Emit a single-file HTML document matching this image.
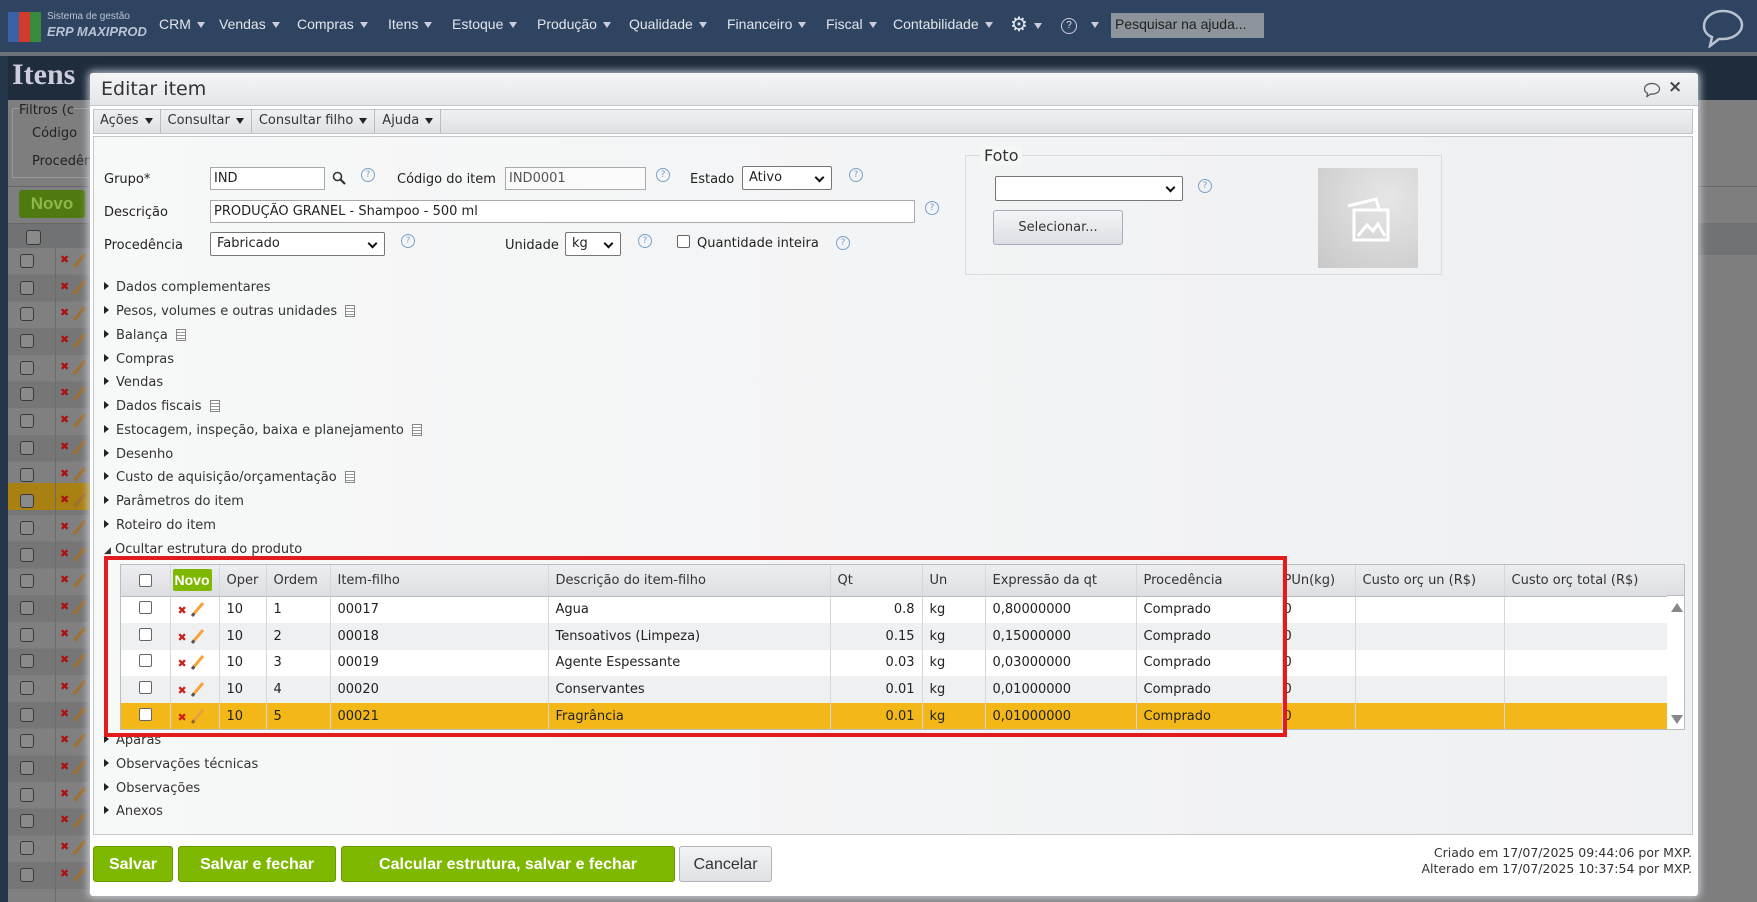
<!DOCTYPE html>
<html><head><meta charset="utf-8">
<style>
*{box-sizing:border-box;margin:0;padding:0}
body{width:1757px;height:902px;overflow:hidden;position:relative;background:#7c7c7c;font-family:"DejaVu Sans","Liberation Sans",sans-serif;font-size:13px;color:#222}
.a{position:absolute}
.nav{left:0;top:0;width:1757px;height:52px;background:#2f4461}
.nav span{position:absolute;top:16px;color:#e2e6ec;font-size:14px;font-family:"Liberation Sans",sans-serif}
.tri{display:inline-block;width:0;height:0;border-left:4px solid transparent;border-right:4px solid transparent;border-top:6px solid #222;vertical-align:middle;margin-left:6px}
.navtri{border-top-color:#ccd}
.cb{position:absolute;width:13px;height:13px;border:1px solid #555;border-radius:2px;background:#fff}
.modal{left:90px;top:73px;width:1608px;height:823px;background:#fff;border-radius:3px;box-shadow:0 0 8px 2px rgba(220,225,235,.8)}
.lbl{position:absolute;font-size:13px;color:#222}
.inp{position:absolute;height:23px;border:1px solid #a9a9a9;background:#fff;font-size:13px;padding:3px 3px;white-space:nowrap}
.sel{position:absolute;height:24px;border:1px solid #767676;border-radius:2px;background:#fff;font-size:13px;padding:3px 6px}
.sel:after{content:"";position:absolute;right:8px;top:7px;width:5px;height:5px;border-right:2px solid #111;border-bottom:2px solid #111;transform:rotate(45deg)}
.q{position:absolute;width:14px;height:14px;border:1px solid #7aa0c8;border-radius:50%;color:#7aa0c8;font-size:9px;text-align:center;line-height:12px}
.sec{position:absolute;left:104px;font-size:13px;color:#333}
.sec:before{content:"";display:inline-block;width:0;height:0;border-top:4px solid transparent;border-bottom:4px solid transparent;border-left:5px solid #222;margin-right:7px;vertical-align:1px}
.doc{display:inline-block;width:10px;height:12px;border:1px solid #888;margin-left:8px;vertical-align:-2px;background:repeating-linear-gradient(#fff 0 2px,#999 2px 3px)}
table{border-collapse:collapse;font-size:13px}
td,th{border-right:1px solid #d5d7db;padding:0 7px;white-space:nowrap;text-align:left;font-weight:normal}
th{height:31px;background:linear-gradient(#eceef1,#dcdee2);color:#333;border-bottom:1px solid #b8bbc0}
td{height:26.8px}
tr.w td{background:#fff}tr.g td{background:#eff0f2}tr.y td{background:#f3b818}
.btn{position:absolute;top:846px;height:36px;background:#7fb800;color:#fff;font-weight:bold;font-family:"Liberation Sans",sans-serif;font-size:16px;border-radius:3px;text-align:center;line-height:36px;border:1px solid #6a9a00}
.x{color:#c9211e;font-weight:bold;font-size:11px}
.pen{display:inline-block;width:3px;height:17px;background:linear-gradient(#f6a33a 80%,#555 80%);transform:rotate(40deg);margin-left:9px;vertical-align:-4px}
.lr{position:relative;height:26.7px;width:82px}
.lr .c{position:absolute;left:12px;top:6px;width:14px;height:14px;border:1px solid #3a3a3a;border-radius:3px;background:#8a8a8a}
.lr .xx{position:absolute;left:52px;top:5px;color:#a11;font-size:11px;font-weight:bold}
.lr .pp{position:absolute;left:70px;top:4px;width:3px;height:17px;background:#a07030;transform:rotate(40deg)}
</style></head><body>
<div class="a nav">
 <div class="a" style="left:8px;top:12px;width:33px;height:30px;background:linear-gradient(90deg,#3b62a8 0 33%,#d23a2e 33% 66%,#3a8a3e 66%)"></div>
 <div class="a" style="left:47px;top:11px;color:#b8c4d4;font-size:10px;font-family:'Liberation Sans'">Sistema de gestão</div>
 <div class="a" style="left:47px;top:24px;color:#b8c4d4;font-size:13px;font-style:italic;font-weight:bold;font-family:'Liberation Sans'">ERP MAXIPROD</div>
 <span style="left:159px">CRM<i class="tri navtri"></i></span>
 <span style="left:219px">Vendas<i class="tri navtri"></i></span>
 <span style="left:297px">Compras<i class="tri navtri"></i></span>
 <span style="left:388px">Itens<i class="tri navtri"></i></span>
 <span style="left:452px">Estoque<i class="tri navtri"></i></span>
 <span style="left:537px">Produção<i class="tri navtri"></i></span>
 <span style="left:629px">Qualidade<i class="tri navtri"></i></span>
 <span style="left:727px">Financeiro<i class="tri navtri"></i></span>
 <span style="left:826px">Fiscal<i class="tri navtri"></i></span>
 <span style="left:893px">Contabilidade<i class="tri navtri"></i></span>
 <span style="left:1010px;font-size:20px;top:12px">⚙<i class="tri navtri"></i></span>
 <span style="left:1061px;top:18px;width:16px;height:16px;border:1.5px solid #ccd;border-radius:50%;font-size:10px;text-align:center;line-height:13px">?</span>
 <span style="left:1085px;top:16px"><i class="tri navtri"></i></span>
 <div class="a" style="left:1111px;top:13px;width:153px;height:25px;background:#8e949b;color:#222;font-size:14px;padding:3px 4px;font-family:'Liberation Sans'">Pesquisar na ajuda...</div>
 <svg class="a" style="left:1700px;top:8px" width="46" height="40" viewBox="0 0 46 40"><path d="M23 3C12 3 4 10 4 18c0 5 3 9 8 11l-2 9 9-7c1 0 3 0 4 0 11 0 19-7 19-14S34 3 23 3z" fill="none" stroke="#b9c3d0" stroke-width="2.5"/></svg>
</div>
<div class="a" style="left:0;top:52px;width:1757px;height:4px;background:#6c727a"></div>
<div class="a" style="left:0;top:56px;width:1757px;height:846px;background:#26364a"></div>
<div class="a" style="left:8px;top:56px;width:1749px;height:44px;background:#1f2c3c"></div>
<div class="a" style="left:12px;top:58px;color:#ccd;font-size:30px;font-weight:bold;font-family:'Liberation Serif'">Itens</div>
<div class="a" style="left:8px;top:100px;width:1749px;height:802px;background:#7e7e7e"></div>
<div class="a" style="left:12px;top:108px;width:90px;height:70px;border:1px solid #999"></div>
<div class="a" style="left:19px;top:103px;background:#7e7e7e;color:#222;font-size:13px">Filtros (c</div>
<div class="a" style="left:32px;top:126px;color:#222">Código</div>
<div class="a" style="left:32px;top:154px;color:#222">Procedên</div>
<div class="a" style="left:8px;top:186px;width:1749px;height:1px;background:#666"></div>
<div class="a" style="left:19px;top:190px;width:66px;height:28px;background:#4f7a10;color:#8fb64a;font-weight:bold;font-size:17px;text-align:center;line-height:28px;border-radius:3px;font-family:'Liberation Sans'">Novo</div>
<div class="a" style="left:1720px;top:194px;color:#222">Exibir</div>
<div class="a" style="left:8px;top:223px;width:1749px;height:32px;background:#717274;border-top:1px solid #666;border-bottom:1px solid #666"></div>
<div class="a" style="left:26px;top:230px;width:15px;height:15px;border:1px solid #3a3a3a;border-radius:3px;background:#8a8a8a"></div>
<div class="a" style="left:8px;top:248px;width:82px;height:654px;background:repeating-linear-gradient(#808080 0 26.7px,#767676 26.7px 53.4px)">
 <div class="a" style="left:0;top:235px;width:82px;height:27px;background:#a98012"></div>
 <div class="a" style="left:47px;top:0;width:1px;height:654px;background:#6c6c6c"></div>
 <div class="a" style="left:0;top:0">
  <div class="lr"><i class="c"></i><b class="xx">✖</b><i class="pp"></i></div><div class="lr"><i class="c"></i><b class="xx">✖</b><i class="pp"></i></div><div class="lr"><i class="c"></i><b class="xx">✖</b><i class="pp"></i></div><div class="lr"><i class="c"></i><b class="xx">✖</b><i class="pp"></i></div><div class="lr"><i class="c"></i><b class="xx">✖</b><i class="pp"></i></div><div class="lr"><i class="c"></i><b class="xx">✖</b><i class="pp"></i></div><div class="lr"><i class="c"></i><b class="xx">✖</b><i class="pp"></i></div><div class="lr"><i class="c"></i><b class="xx">✖</b><i class="pp"></i></div><div class="lr"><i class="c"></i><b class="xx">✖</b><i class="pp"></i></div><div class="lr"><i class="c"></i><b class="xx">✖</b><i class="pp"></i></div><div class="lr"><i class="c"></i><b class="xx">✖</b><i class="pp"></i></div><div class="lr"><i class="c"></i><b class="xx">✖</b><i class="pp"></i></div><div class="lr"><i class="c"></i><b class="xx">✖</b><i class="pp"></i></div><div class="lr"><i class="c"></i><b class="xx">✖</b><i class="pp"></i></div><div class="lr"><i class="c"></i><b class="xx">✖</b><i class="pp"></i></div><div class="lr"><i class="c"></i><b class="xx">✖</b><i class="pp"></i></div><div class="lr"><i class="c"></i><b class="xx">✖</b><i class="pp"></i></div><div class="lr"><i class="c"></i><b class="xx">✖</b><i class="pp"></i></div><div class="lr"><i class="c"></i><b class="xx">✖</b><i class="pp"></i></div><div class="lr"><i class="c"></i><b class="xx">✖</b><i class="pp"></i></div><div class="lr"><i class="c"></i><b class="xx">✖</b><i class="pp"></i></div><div class="lr"><i class="c"></i><b class="xx">✖</b><i class="pp"></i></div><div class="lr"><i class="c"></i><b class="xx">✖</b><i class="pp"></i></div><div class="lr"><i class="c"></i><b class="xx">✖</b><i class="pp"></i></div>
 </div>
</div>
<div class="a" style="left:1698px;top:100px;width:59px;height:802px;background:#7e7e7e"></div>
<div class="a" style="left:1698px;top:186px;width:59px;height:1px;background:#666"></div>
<div class="a" style="left:1698px;top:223px;width:59px;height:32px;background:#717274"></div>

<div class="a modal">
 <div class="a" style="left:0;top:0;width:1608px;height:33px;background:linear-gradient(#f4f5f7,#e4e6e9);border-bottom:1px solid #c4c7cc;border-radius:3px 3px 0 0"></div>
 <div class="a" style="left:11px;top:5px;font-size:19px;color:#333">Editar item</div>
 <svg class="a" style="left:1553px;top:9px" width="18" height="16" viewBox="0 0 18 16"><path d="M9 1.5C4.5 1.5 1.5 4 1.5 7c0 2 1.3 3.5 3 4.3L4 14.5l3.5-2.5c.5.1 1 .1 1.5.1 4.5 0 7.5-2.5 7.5-5.1S13.5 1.5 9 1.5z" fill="none" stroke="#555" stroke-width="1.2"/></svg>
 <div class="a" style="left:1578px;top:4px;font-size:17px;font-weight:bold;color:#444">×</div>
 <div class="a" style="left:3px;top:36px;width:1600px;height:25px;background:linear-gradient(#eef0f2,#dfe1e4);border:1px solid #c1c4c9"></div>
 <div class="a" style="left:3px;top:36px;height:25px;font-size:13px;color:#333;line-height:24px;display:flex">
  <span style="padding:0 7px;border-right:1px solid #b9bcc1">Ações<i class="tri"></i></span>
  <span style="padding:0 7px;border-right:1px solid #b9bcc1">Consultar<i class="tri"></i></span>
  <span style="padding:0 7px;border-right:1px solid #b9bcc1">Consultar filho<i class="tri"></i></span>
  <span style="padding:0 7px;border-right:1px solid #b9bcc1">Ajuda<i class="tri"></i></span>
 </div>
 <div class="a" style="left:3px;top:63px;width:1600px;height:699px;background:linear-gradient(90deg,#f7f8f8,#eff0f2);border:1px solid #c4c7cc"></div>
</div>
<div class="lbl" style="left:104px;top:172px">Grupo*</div>
<div class="inp" style="left:210px;top:167px;width:115px">IND</div>
<svg class="a" style="left:332px;top:171px" width="14" height="14" viewBox="0 0 14 14"><circle cx="5.5" cy="5.5" r="4" fill="none" stroke="#333" stroke-width="1.6"/><path d="M8.5 8.5L13 13" stroke="#333" stroke-width="2.2"/></svg>
<div class="q" style="left:361px;top:168px">?</div>
<div class="lbl" style="left:397px;top:172px">Código do item</div>
<div class="inp" style="left:505px;top:167px;width:141px;color:#555;background:#fafafa">IND0001</div>
<div class="q" style="left:656px;top:168px">?</div>
<div class="lbl" style="left:690px;top:172px">Estado</div>
<div class="sel" style="left:742px;top:166px;width:90px">Ativo</div>
<div class="q" style="left:849px;top:168px">?</div>
<div class="lbl" style="left:104px;top:205px">Descrição</div>
<div class="inp" style="left:210px;top:200px;width:705px">PRODUÇÃO GRANEL - Shampoo - 500 ml</div>
<div class="q" style="left:925px;top:201px">?</div>
<div class="lbl" style="left:104px;top:238px">Procedência</div>
<div class="sel" style="left:210px;top:232px;width:175px">Fabricado</div>
<div class="q" style="left:401px;top:234px">?</div>
<div class="lbl" style="left:505px;top:238px">Unidade</div>
<div class="sel" style="left:565px;top:232px;width:56px">kg</div>
<div class="q" style="left:638px;top:234px">?</div>
<div class="cb" style="left:677px;top:235px;border-color:#666"></div>
<div class="lbl" style="left:697px;top:236px">Quantidade inteira</div>
<div class="q" style="left:836px;top:236px">?</div>
<div class="a" style="left:965px;top:155px;width:477px;height:120px;border:1px solid #d9dbde"></div>
<div class="a" style="left:980px;top:146px;background:#f5f6f6;padding:0 4px;font-size:16px;color:#333">Foto</div>
<div class="sel" style="left:995px;top:176px;width:188px;height:25px"></div>
<div class="q" style="left:1198px;top:179px">?</div>
<div class="a" style="left:993px;top:210px;width:130px;height:35px;border:1px solid #aab;border-radius:3px;background:linear-gradient(#f4f5f7,#dcdfe3);text-align:center;line-height:33px;font-size:13px;color:#333">Selecionar...</div>
<div class="a" style="left:1318px;top:168px;width:100px;height:100px;background:radial-gradient(circle at 70% 30%,#e6e6e6,#c8c8c8)">
 <svg width="100" height="100" viewBox="0 0 100 100"><g fill="none" stroke="#fff" stroke-width="3"><path d="M30 38l28-7 3 10"/><rect x="36" y="42" width="34" height="30"/><path d="M40 68l9-11 6 6 5-7 7 12"/></g></svg>
</div>
<div class="sec" style="top:280px">Dados complementares</div>
<div class="sec" style="top:304px">Pesos, volumes e outras unidades<i class="doc"></i></div>
<div class="sec" style="top:328px">Balança<i class="doc"></i></div>
<div class="sec" style="top:352px">Compras</div>
<div class="sec" style="top:375px">Vendas</div>
<div class="sec" style="top:399px">Dados fiscais<i class="doc"></i></div>
<div class="sec" style="top:423px">Estocagem, inspeção, baixa e planejamento<i class="doc"></i></div>
<div class="sec" style="top:447px">Desenho</div>
<div class="sec" style="top:470px">Custo de aquisição/orçamentação<i class="doc"></i></div>
<div class="sec" style="top:494px">Parâmetros do item</div>
<div class="sec" style="top:518px">Roteiro do item</div>
<div class="a" style="left:104px;top:542px;font-size:13px;color:#333"><span style="font-size:9px">◢</span> Ocultar estrutura do produto</div>
<div class="sec" style="top:733px">Aparas</div>
<div class="sec" style="top:757px">Observações técnicas</div>
<div class="sec" style="top:781px">Observações</div>
<div class="sec" style="top:804px">Anexos</div>
<div class="a" style="left:120px;top:564px;width:1565px;height:166px;border:1px solid #b9bcc1;background:#fff;overflow:hidden">
<table style="width:1546px;table-layout:fixed">
<colgroup><col style="width:49px"><col style="width:49px"><col style="width:47px"><col style="width:64px"><col style="width:218px"><col style="width:282px"><col style="width:92px"><col style="width:63px"><col style="width:151px"><col style="width:146px"><col style="width:73px"><col style="width:149px"><col style="width:163px"></colgroup>
<tr><th style="text-align:center"><span class="cb" style="position:relative;display:inline-block;top:2px;border-color:#666"></span></th><th style="padding:0 2px"><span style="background:#7fb800;color:#fff;font-weight:bold;font-family:'Liberation Sans';font-size:14px;padding:3px 2px;border-radius:2px">Novo</span></th><th>Oper</th><th>Ordem</th><th>Item-filho</th><th>Descrição do item-filho</th><th>Qt</th><th>Un</th><th>Expressão da qt</th><th>Procedência</th><th style="padding:0 1px">PUn(kg)</th><th>Custo orç un (R$)</th><th>Custo orç total (R$)</th></tr>
<tr class="w"><td style="text-align:center"><span class="cb" style="position:relative;display:inline-block;border-color:#666"></span></td><td><span class="x">✖</span><i class="pen"></i></td><td>10</td><td>1</td><td>00017</td><td>Agua</td><td style="text-align:right">0.8</td><td>kg</td><td>0,80000000</td><td>Comprado</td><td style="padding:0 1px">0</td><td></td><td></td></tr>
<tr class="g"><td style="text-align:center"><span class="cb" style="position:relative;display:inline-block;border-color:#666"></span></td><td><span class="x">✖</span><i class="pen"></i></td><td>10</td><td>2</td><td>00018</td><td>Tensoativos (Limpeza)</td><td style="text-align:right">0.15</td><td>kg</td><td>0,15000000</td><td>Comprado</td><td style="padding:0 1px">0</td><td></td><td></td></tr>
<tr class="w"><td style="text-align:center"><span class="cb" style="position:relative;display:inline-block;border-color:#666"></span></td><td><span class="x">✖</span><i class="pen"></i></td><td>10</td><td>3</td><td>00019</td><td>Agente Espessante</td><td style="text-align:right">0.03</td><td>kg</td><td>0,03000000</td><td>Comprado</td><td style="padding:0 1px">0</td><td></td><td></td></tr>
<tr class="g"><td style="text-align:center"><span class="cb" style="position:relative;display:inline-block;border-color:#666"></span></td><td><span class="x">✖</span><i class="pen"></i></td><td>10</td><td>4</td><td>00020</td><td>Conservantes</td><td style="text-align:right">0.01</td><td>kg</td><td>0,01000000</td><td>Comprado</td><td style="padding:0 1px">0</td><td></td><td></td></tr>
<tr class="y"><td style="text-align:center"><span class="cb" style="position:relative;display:inline-block;border-color:#666"></span></td><td><span class="x">✖</span><i class="pen" style="background:linear-gradient(#e6a040 80%,#8a6a2a 80%)"></i></td><td>10</td><td>5</td><td>00021</td><td>Fragrância</td><td style="text-align:right">0.01</td><td>kg</td><td>0,01000000</td><td>Comprado</td><td style="padding:0 1px">0</td><td></td><td></td></tr>
</table>
<div class="a" style="left:1546px;top:0;width:19px;height:31px;background:linear-gradient(#eceef1,#dcdee2);border-bottom:1px solid #b8bbc0"></div>
<div class="a" style="left:1546px;top:31px;width:19px;height:135px;background:#fff"></div>
<div class="a" style="left:1550px;top:38px;border-left:6px solid transparent;border-right:6px solid transparent;border-bottom:9px solid #888"></div>
<div class="a" style="left:1550px;top:150px;border-left:6px solid transparent;border-right:6px solid transparent;border-top:9px solid #888"></div>
</div>
<div class="a" style="left:104px;top:556px;width:1183px;height:181px;border:4px solid #e21b1b"></div>
<div class="btn" style="left:93px;width:80px">Salvar</div>
<div class="btn" style="left:178px;width:158px">Salvar e fechar</div>
<div class="btn" style="left:341px;width:334px">Calcular estrutura, salvar e fechar</div>
<div class="btn" style="left:679px;width:93px;background:linear-gradient(#f2f3f5,#dfe1e4);color:#333;font-weight:normal;border-color:#b0b3b8">Cancelar</div>
<div class="a" style="left:1300px;top:845px;width:392px;text-align:right;font-size:12.5px;color:#333;line-height:16px">Criado em 17/07/2025 09:44:06 por MXP.<br>Alterado em 17/07/2025 10:37:54 por MXP.</div>
</body></html>
